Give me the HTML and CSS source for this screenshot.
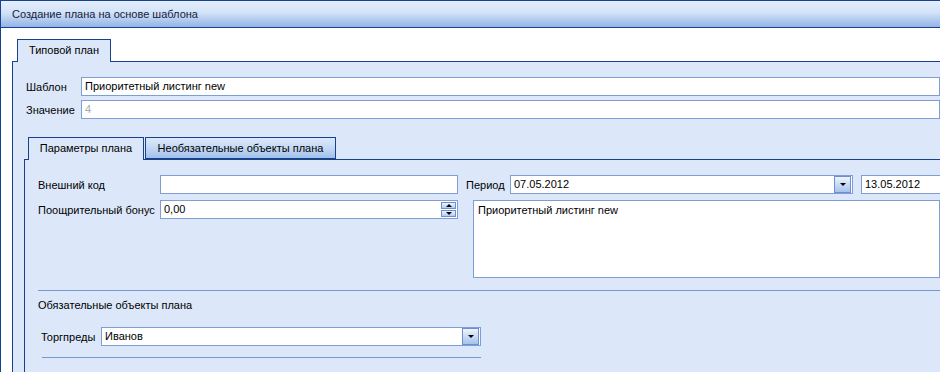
FILE: index.html
```html
<!DOCTYPE html>
<html lang="ru">
<head>
<meta charset="utf-8">
<link rel="stylesheet" href="styles.css">
</head>
<body>
<div class="window">
  <div class="titlebar">Создание плана на основе шаблона</div>
  <div class="client">
    <div class="tabs outer-tabs">
      <div class="tab active">Типовой план</div>
    </div>
    <div class="panel outer-panel">
      <div class="row first-row">
        <span class="lbl lbl-tpl">Шаблон</span>
        <div class="input grow">Приоритетный листинг new</div>
      </div>
      <div class="row second-row">
        <span class="lbl lbl-tpl">Значение</span>
        <div class="input grow disabled">4</div>
      </div>

      <div class="tabs inner-tabs">
        <div class="tab active">Параметры плана</div>
        <div class="tab inactive">Необязательные объекты плана</div>
      </div>
      <div class="panel inner-panel">
        <div class="params">
          <div class="col-left">
            <div class="field">
              <span class="lbl lbl-param">Внешний код</span>
              <div class="input param-input"></div>
            </div>
            <div class="field field-2">
              <span class="lbl lbl-param">Поощрительный бонус</span>
              <div class="input param-input spin-input">
                <span class="val">0,00</span>
                <span class="spin">
                  <span class="sbtn"><span class="tri up"></span></span>
                  <span class="sbtn"><span class="tri down"></span></span>
                </span>
              </div>
            </div>
          </div>
          <div class="col-right">
            <div class="field">
              <span class="lbl lbl-period">Период</span>
              <div class="input combo date-combo">
                <span class="val">07.05.2012</span>
                <span class="dbtn"><span class="tri down"></span></span>
              </div>
              <div class="input date-to">13.05.2012</div>
            </div>
            <div class="memo">Приоритетный листинг new</div>
          </div>
        </div>
        <div class="sep sep-long"></div>
        <div class="group-title">Обязательные объекты плана</div>
        <div class="field torg">
          <span class="lbl lbl-torg">Торгпреды</span>
          <div class="input combo torg-combo">
            <span class="val">Иванов</span>
            <span class="dbtn"><span class="tri down"></span></span>
          </div>
        </div>
        <div class="sep sep-short"></div>
      </div>
    </div>
  </div>
</div>
</body>
</html>
```

FILE: styles.css
```css
* { box-sizing: border-box; }
html, body {
  margin: 0;
  padding: 0;
  background: #ffffff;
  width: 940px;
  height: 372px;
  overflow: hidden;
}
body {
  font-family: "Liberation Sans", Arial, sans-serif;
  font-size: 11px;
  color: #000;
}
.window {
  width: 940px;
  height: 372px;
  border-left: 1px solid #15428b;
  display: flex;
  flex-direction: column;
}
.titlebar {
  height: 28px;
  flex: none;
  border-top: 1px solid #15428b;
  border-bottom: 1px solid #15428b;
  background: linear-gradient(to bottom, #e4eefc 0%, #d2e2f8 45%, #92b4e6 100%);
  padding-left: 11px;
  line-height: 26px;
  color: #15223b;
  white-space: nowrap;
}
.client {
  flex: 1;
  padding: 11px 0 0 11px;
  display: flex;
  flex-direction: column;
  min-height: 0;
}
.tabs {
  display: flex;
  flex: none;
  height: 23px;
  margin-bottom: -1px;
  position: relative;
  z-index: 1;
}
.tab {
  height: 23px;
  border: 1px solid #15428b;
  border-bottom: none;
  line-height: 21px;
  white-space: nowrap;
  text-align: center;
}
.tab.active {
  background: #dce8fa;
}
.tab.inactive {
  background: linear-gradient(to bottom, #dce9fb 0%, #c4d8f5 50%, #a2c0eb 100%);
  border-bottom: 1px solid #15428b;
  height: 22px;
  line-height: 20px;
  margin-left: 1px;
}
.outer-tabs { margin-left: 5px; }
.outer-tabs .tab { width: 94px; }
.panel {
  background: #dce8fa;
  border-top: 1px solid #15428b;
  border-left: 1px solid #15428b;
}
.outer-panel {
  flex: 1;
  padding-top: 15px;
  display: flex;
  flex-direction: column;
  min-height: 0;
}
.row {
  display: flex;
  align-items: center;
  height: 19px;
  padding-left: 13px;
}
.second-row { margin-top: 4px; }
.lbl {
  white-space: nowrap;
  flex: none;
}
.lbl-tpl { width: 55px; }
.input {
  height: 19px;
  border: 1px solid #7f9ed6;
  background: #fff;
  padding: 0 3px;
  line-height: 17px;
  white-space: nowrap;
  overflow: hidden;
}
.grow { flex: 1; }
.disabled { color: #a6aab0; }

.inner-tabs {
  margin-top: 18px;
  margin-left: 15px;
}
.inner-tabs .tab.active { width: 116px; }
.inner-tabs .tab.inactive { width: 191px; }
.inner-panel {
  flex: 1;
  margin-left: 11px;
  padding: 15px 0 0 13px;
  display: flex;
  flex-direction: column;
}
.params {
  display: flex;
  align-items: flex-start;
}
.col-left {
  width: 420px;
  flex: none;
}
.field {
  display: flex;
  align-items: center;
  height: 19px;
}
.field-2 { margin-top: 6px; }
.lbl-param { width: 122px; }
.param-input { width: 298px; }
.spin-input {
  display: flex;
  align-items: center;
  justify-content: space-between;
  padding-right: 1px;
}
.spin {
  display: flex;
  flex-direction: column;
  gap: 1px;
  width: 15px;
}
.sbtn {
  height: 7px;
  border: 1px solid #6d8fcf;
  background: linear-gradient(to bottom, #eef4fd, #b3cbef);
  display: flex;
  align-items: center;
  justify-content: center;
}
.tri {
  width: 0;
  height: 0;
  border-left: 3px solid transparent;
  border-right: 3px solid transparent;
}
.tri.down { border-top: 3px solid #000; }
.tri.up { border-bottom: 3px solid #000; }

.col-right {
  margin-left: 8px;
  flex: 1;
  min-width: 0;
}
.lbl-period { width: 44px; }
.combo {
  display: flex;
  align-items: center;
  justify-content: space-between;
  padding-right: 1px;
}
.date-combo { width: 343px; flex: none; }
.dbtn {
  width: 17px;
  height: 17px;
  border: 1px solid #6d8fcf;
  background: linear-gradient(to bottom, #eef4fd 0%, #c9dbf5 50%, #a6c2ec 100%);
  display: flex;
  align-items: center;
  justify-content: center;
}
.date-to {
  margin-left: 8px;
  flex: 1;
  min-width: 100px;
}
.memo {
  margin-top: 6px;
  margin-left: 7px;
  height: 78px;
  border: 1px solid #7f9ed6;
  background: #fff;
  padding: 2px 4px;
  line-height: 14px;
  white-space: nowrap;
}
.sep {
  height: 1px;
  background: #7396d4;
  flex: none;
}
.sep-long { margin-top: 12px; }
.group-title {
  margin-top: 7px;
  line-height: 14px;
  height: 14px;
}
.torg {
  margin-top: 15px;
  padding-left: 3px;
}
.lbl-torg { width: 60px; }
.torg-combo { width: 380px; flex: none; }
.sep-short {
  margin-top: 11px;
  margin-left: 4px;
  width: 439px;
}
```
